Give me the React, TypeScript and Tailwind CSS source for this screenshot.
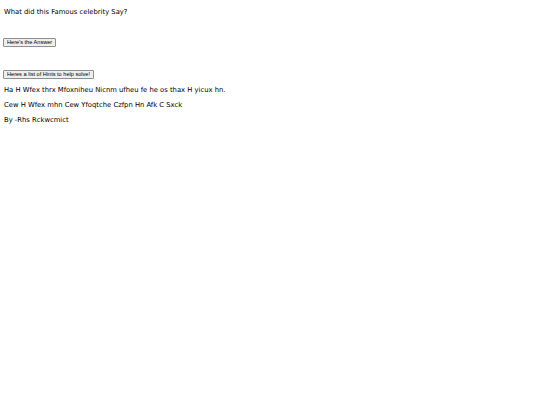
export default function App() {
  const lines = [
    "Ha H Wfex thrx Mfoxniheu Nicnm ufheu fe he os thax H yicux hn.",
    "Cew H Wfex mhn Cew Yfoqtche Czfpn Hn Afk C Sxck",
    "By -Rhs Rckwcmict",
  ];

  return (
    <div className="min-h-[405px] w-[540px] bg-white pl-[4px] pt-[8px] text-black">
      <p className="font-['DejaVu_Sans',sans-serif] text-[6.8px] leading-[8px]">
        What did this Famous celebrity Say?
      </p>

      <div className="mt-[22px] flex">
        <button className="-ml-[1px] h-[9px] rounded-[1px] border border-[#8f8f8f] bg-[#efefef] px-[3px] font-['Liberation_Sans',Arial,sans-serif] text-[5.6px] leading-[7px]">
          Here's the Answer
        </button>
      </div>

      <div className="mt-[23px] flex">
        <button className="-ml-[1px] h-[9px] rounded-[1px] border border-[#8f8f8f] bg-[#efefef] px-[3px] font-['Liberation_Sans',Arial,sans-serif] text-[5.6px] leading-[7px]">
          Heres a list of Hints to help solve!
        </button>
      </div>

      <div className="mt-[7px] flex flex-col gap-[7px] font-['DejaVu_Sans',sans-serif] text-[6.8px] leading-[8px]">
        {lines.map((l) => (
          <p key={l}>{l}</p>
        ))}
      </div>
    </div>
  );
}
